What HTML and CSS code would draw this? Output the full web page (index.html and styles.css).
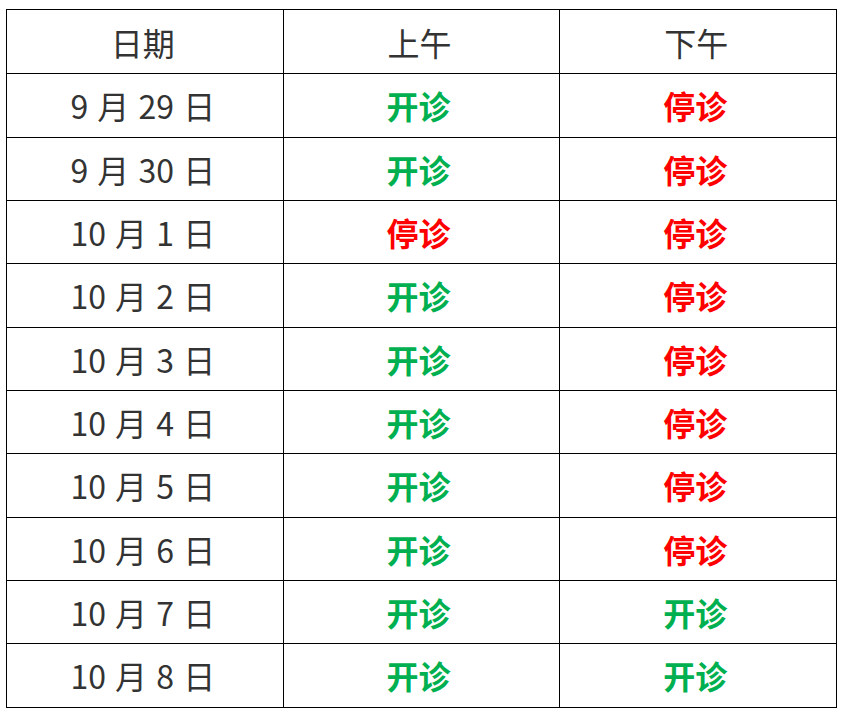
FILE: index.html
```html
<!DOCTYPE html>
<html lang="zh-CN">
<head>
<meta charset="utf-8">
<link rel="stylesheet" href="styles.css">
</head>
<body>
<table class="schedule">
  <thead>
    <tr><th>日期</th><th>上午</th><th>下午</th></tr>
  </thead>
  <tbody>
    <tr><td class="date">9 月 29 日</td><td class="open">开诊</td><td class="closed">停诊</td></tr>
    <tr><td class="date">9 月 30 日</td><td class="open">开诊</td><td class="closed">停诊</td></tr>
    <tr><td class="date">10 月 1 日</td><td class="closed">停诊</td><td class="closed">停诊</td></tr>
    <tr><td class="date">10 月 2 日</td><td class="open">开诊</td><td class="closed">停诊</td></tr>
    <tr><td class="date">10 月 3 日</td><td class="open">开诊</td><td class="closed">停诊</td></tr>
    <tr><td class="date">10 月 4 日</td><td class="open">开诊</td><td class="closed">停诊</td></tr>
    <tr><td class="date">10 月 5 日</td><td class="open">开诊</td><td class="closed">停诊</td></tr>
    <tr><td class="date">10 月 6 日</td><td class="open">开诊</td><td class="closed">停诊</td></tr>
    <tr><td class="date">10 月 7 日</td><td class="open">开诊</td><td class="open">开诊</td></tr>
    <tr><td class="date">10 月 8 日</td><td class="open">开诊</td><td class="open">开诊</td></tr>
  </tbody>
</table>
</body>
</html>
```
FILE: styles.css
```css
html, body {
  margin: 0;
  padding: 0;
  background: #ffffff;
}
body {
  padding: 9px 0 0 6px;
  font-family: "Noto Sans CJK SC", "Noto Sans", sans-serif;
}
.schedule {
  border-collapse: collapse;
  width: 831px;
  table-layout: fixed;
}
.schedule th,
.schedule td {
  border: 1px solid #000;
  height: 62.35px;
  padding: 0 4px 0 0;
  text-align: center;
  vertical-align: middle;
  font-size: 32px;
  line-height: 1;
}
.schedule th {
  height: 63.2px;
  font-weight: normal;
  color: #333333;
}
.schedule .date {
  color: #333333;
  word-spacing: 2px;
}
.schedule .open {
  color: #00b050;
  font-weight: bold;
  padding-right: 6px;
}
.schedule .closed {
  color: #ff0000;
  font-weight: bold;
  padding-right: 6px;
}
```
